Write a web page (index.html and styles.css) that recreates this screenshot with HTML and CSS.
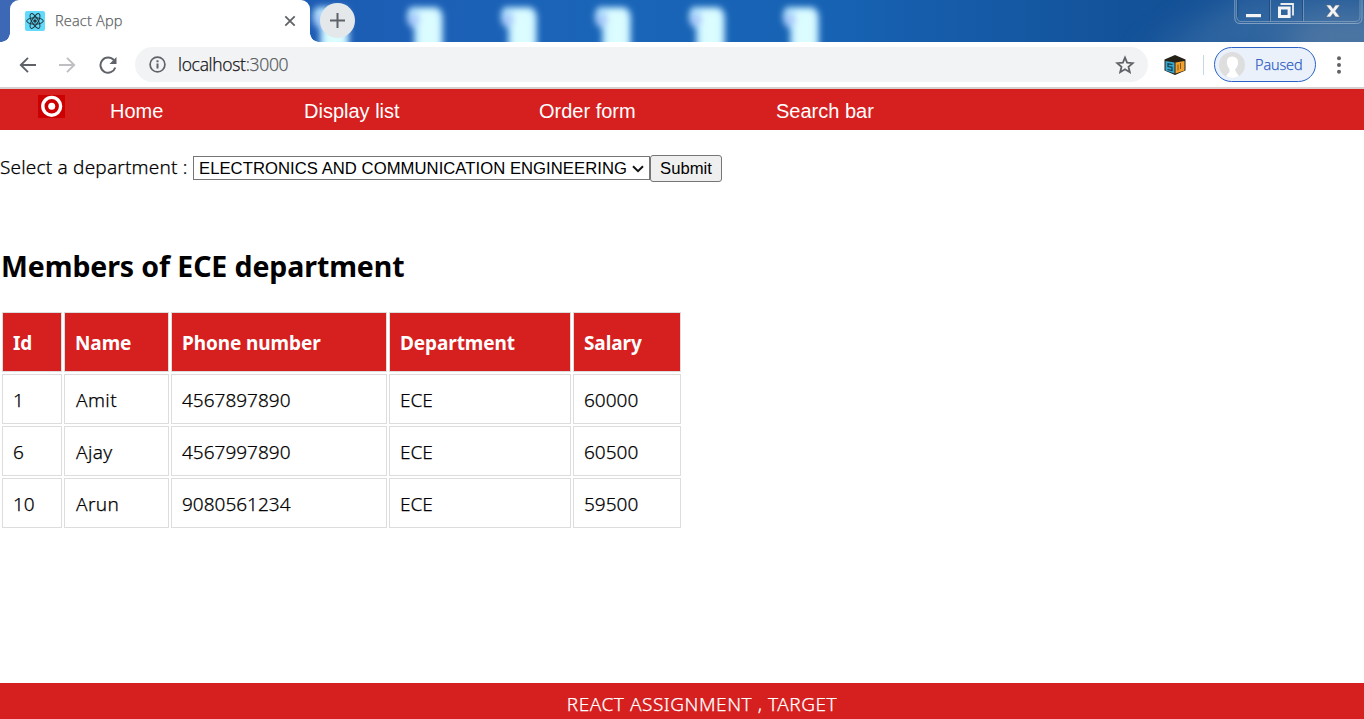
FILE: index.html
```html
<!DOCTYPE html>
<html lang="en">
<head>
<meta charset="utf-8">
<title>React App</title>
<link rel="stylesheet" href="styles.css">
</head>
<body>
<div class="window">
  <div class="titlebar">
    <svg class="wallpaper" width="1364" height="42" viewBox="0 0 1364 42" aria-hidden="true">
      <defs>
        <filter id="soft" x="-30%" y="-30%" width="160%" height="160%"><feGaussianBlur stdDeviation="3"/></filter>
        <filter id="haze" x="-30%" y="-60%" width="160%" height="220%"><feGaussianBlur stdDeviation="16"/></filter>
        <g id="scroll">
          <path d="M6 7 H30 Q38 8 38 18 V60 H9 V28 Q2 26 2 17 Q2 10 6 7Z" fill="#b5e4ff"/>
          <path d="M14 10 H30 Q34 12 34 20 V60 H14Z" fill="#dcfdff"/>
          <circle cx="9" cy="20" r="6" fill="#a9c9fb"/>
        </g>
      </defs>
      <path d="M1140 60 L1250 -10 H1400 V60Z" fill="#4c7cac" opacity=".5" filter="url(#haze)"/>
      <path d="M1270 60 L1310 18 H1400 V60Z" fill="#6685a8" opacity=".6" filter="url(#haze)"/>
      <g filter="url(#soft)">
        <use href="#scroll" x="311"/><use href="#scroll" x="405"/><use href="#scroll" x="499"/>
        <use href="#scroll" x="593"/><use href="#scroll" x="687"/><use href="#scroll" x="781"/>
      </g>
    </svg>
    <div class="tab">
      <svg width="20" height="20" viewBox="0 0 20 20"><rect width="20" height="20" rx="2" fill="#61dafb"/><g fill="none" stroke="#20343c" stroke-width="1"><ellipse cx="10" cy="10" rx="8.3" ry="3.2"/><ellipse cx="10" cy="10" rx="8.3" ry="3.2" transform="rotate(60 10 10)"/><ellipse cx="10" cy="10" rx="8.3" ry="3.2" transform="rotate(120 10 10)"/></g><circle cx="10" cy="10" r="1.8" fill="#20343c"/></svg>
      <span class="tab-title">React App</span>
      <svg width="12" height="12" viewBox="0 0 12 12" stroke="#5f6368" stroke-width="1.8"><path d="M1.3 1.3 10.7 10.7M10.7 1.3 1.3 10.7"/></svg>
    </div>
    <div class="new-tab"><svg width="15" height="15" viewBox="0 0 15 15" stroke="#5f6368" stroke-width="2"><path d="M0 7.500H15M7.500 0V15"/></svg></div>
    <svg class="controls" width="130" height="25" viewBox="0 0 130 25" fill="none">
      <path d="M.8 0V18Q.8 23.500 6 23.500H122.500Q128 23.500 128 18V0" stroke="#9ab3cd" stroke-opacity=".75"/>
      <path d="M2.600 0V17Q3 21.500 7 21.500H121Q126 21.500 126 17V0M36.500 0V21.500M69.500 0V21.500" stroke="#8ca9c8" stroke-opacity=".65"/>
      <path d="M3.700 0V17M35.500 0V21M68.500 0V21" stroke="#173d6c" stroke-opacity=".55"/>
      <rect x="12" y="14" width="15" height="3.200" fill="#f4f4f4"/>
      <path d="M46.500 4H59V15.500" stroke="#eee" stroke-width="1.800"/>
      <rect x="45.500" y="8" width="9.600" height="8.500" stroke="#f4f4f4" stroke-width="3"/>
      <path d="M92 5H96.500L99 8.500 101.500 5H106L101.400 11 106 17H101.500L99 13.500 96.500 17H92L96.600 11Z" fill="#f4f4f4" stroke="#52647a" stroke-width=".6"/>
    </svg>
  </div>
  <div class="toolbar">
    <svg class="back" width="18" height="18" viewBox="0 0 18 18" fill="none" stroke="#5f6368" stroke-width="1.9"><path d="M17 9H2M9 1.800 1.800 9 9 16.200"/></svg>
    <svg class="forward" width="18" height="18" viewBox="0 0 18 18" fill="none" stroke="#bdbfc2" stroke-width="1.900"><path d="M1 9H16M9 1.800 16.200 9 9 16.200"/></svg>
    <svg class="reload" width="18" height="18" viewBox="0 0 18 18"><path d="M14.900 4.200A7.600 7.600 0 1 0 16.300 11.500" fill="none" stroke="#5f6368" stroke-width="2"/><path d="M17.500 1V8H10.500Z" fill="#5f6368"/></svg>
    <div class="address">
      <svg width="17" height="17" viewBox="0 0 17 17"><circle cx="8.500" cy="8.500" r="7.400" fill="none" stroke="#5f6368" stroke-width="1.700"/><path d="M7.500 7.500H9.500V12.500H7.500ZM7.500 4.300H9.500V6.200H7.500Z" fill="#5f6368"/></svg>
      <span class="url">localhost<span class="port">:3000</span></span>
      <svg class="star" width="20" height="20" viewBox="0 0 20 20" fill="none" stroke="#5f6368" stroke-width="1.800"><path d="M10 2.600 12.100 7.700 17.700 8.200 13.500 11.800 14.800 17.200 10 14.300 5.200 17.200 6.500 11.800 2.300 8.200 7.900 7.700Z"/></svg>
    </div>
    <svg class="cube" width="22" height="20" viewBox="0 0 22 20"><path d="M.5 4.500 11 0 21.500 4.500V15.500L11 20 .5 15.500Z" fill="#252117"/><path d="M1.500 6 10.500 7.500V18.500L1.500 15.500Z" fill="#36a8d2"/><path d="M11.500 7.500 20.500 6V15.500L11.500 18.500Z" fill="#f3a32b"/><path d="M8.500 9.500 4 8.800V11.500L8 12.300V15.500L3.500 14.500" fill="none" stroke="#173c49" stroke-width="1.200"/><path d="M14 9.500V15.500M16.500 8V14" fill="none" stroke="#8a5520" stroke-width="1"/></svg>
    <span class="divider"></span>
    <div class="profile">
      <svg width="26" height="26" viewBox="0 0 26 26"><circle cx="13" cy="13" r="13" fill="#dedede"/><path d="M8 12Q7 5 13 4.500 20 5 19 12 18.500 15.500 16 17.500L17 20 20 24Q13 28 7 24L10.500 20V17Q8.500 15 8 12Z" fill="#fff"/></svg>
      <span class="paused">Paused</span>
    </div>
    <svg class="more" width="4" height="18" viewBox="0 0 4 18" fill="#5f6368"><circle cx="2" cy="2.200" r="2"/><circle cx="2" cy="9" r="2"/><circle cx="2" cy="15.800" r="2"/></svg>
  </div>
  <nav class="nav">
    <svg class="logo" width="27" height="23" viewBox="0 0 27 23"><rect width="27" height="23" fill="#c00"/><circle cx="13.700" cy="11.300" r="8.900" fill="none" stroke="#fff" stroke-width="3.400"/><circle cx="13.700" cy="11.300" r="3.500" fill="#fff"/></svg>
    <a class="home">Home</a><a class="list">Display list</a><a class="order">Order form</a><a class="search">Search bar</a>
  </nav>
  <main class="content">
    <form class="filter">
      <label class="label">Select a department :</label>
      <div class="select"><span class="choice">ELECTRONICS AND COMMUNICATION ENGINEERING</span><svg width="12" height="8" viewBox="0 0 12 8" fill="none" stroke="#111" stroke-width="2"><path d="M1 1.300 6 6.200 11 1.300"/></svg></div>
      <button class="submit" type="button">Submit</button>
    </form>
    <h2 class="heading"><span class="heading-text">Members of ECE department</span></h2>
    <table class="members">
      <colgroup><col class="c-id"><col class="c-name"><col class="c-phone"><col class="c-dept"><col class="c-salary"></colgroup>
      <thead><tr><th>Id</th><th>Name</th><th>Phone number</th><th>Department</th><th>Salary</th></tr></thead>
      <tbody>
        <tr><td>1</td><td>Amit</td><td>4567897890</td><td>ECE</td><td>60000</td></tr>
        <tr><td>6</td><td>Ajay</td><td>4567997890</td><td>ECE</td><td>60500</td></tr>
        <tr><td>10</td><td>Arun</td><td>9080561234</td><td>ECE</td><td>59500</td></tr>
      </tbody>
    </table>
  </main>
  <footer class="footer"><span class="footer-text">REACT ASSIGNMENT , TARGET</span></footer>
</div>
</body>
</html>
```
FILE: styles.css
```css
* { box-sizing: border-box; }
body { margin: 0; overflow: hidden; background: #fff; color: #000; font-family: "Noto Sans", "Open Sans", sans-serif; }
svg { display: block; flex: none; }
.window { width: 1364px; height: 719px; display: flex; flex-direction: column; }

.titlebar { position: relative; height: 42px; flex: none; display: flex; background: linear-gradient(90deg, #3d68b5 0, #1d5cb4 310px, #1a65b8 600px, #1762b3 840px, #135299 1130px, #184f90 1364px); }
.wallpaper { position: absolute; inset: 0; }
.tab { position: relative; width: 300px; height: 42px; margin-left: 10px; padding: 0 14px 0 15px; display: flex; align-items: center; background: #fff; border-radius: 9px 9px 0 0; }
.tab::before, .tab::after { content: ""; position: absolute; bottom: 0; width: 9px; height: 9px; }
.tab::before { left: -9px; background: radial-gradient(circle at 0 0, transparent 8.5px, #fff 9px); }
.tab::after { right: -9px; background: radial-gradient(circle at 100% 0, transparent 8.5px, #fff 9px); }
.tab-title { flex: 1; margin-left: 10px; padding-bottom: 2px; font-size: 14.5px; font-weight: 300; color: #5c5f62; font-family: "Open Sans", sans-serif; letter-spacing: 0.2px; -webkit-text-stroke: 0.25px; }
.new-tab { position: relative; width: 35px; height: 35px; margin: 3px 0 0 10px; border-radius: 50%; background: #e4e8eb; display: flex; align-items: center; justify-content: center; }
.controls { position: relative; margin-left: auto; }

.toolbar { height: 47px; flex: none; display: flex; align-items: center; padding-left: 19px; border-bottom: 2px solid #d6d0d0; background: #fff; }
.forward { margin-left: 21px; }
.reload { margin-left: 23px; }
.address { width: 1013px; height: 35px; margin-left: 18px; padding: 0 13px 0 14px; display: flex; align-items: center; border-radius: 18px; background: #f1f3f4; }
.url { margin-left: 12px; padding-bottom: 2px; font-family: "Open Sans", sans-serif; font-size: 17.5px; font-weight: 300; color: #111; letter-spacing: -0.3px; -webkit-text-stroke: 0.25px; }
.port { color: #55585b; }
.star { margin-left: auto; }
.cube { margin-left: 16px; }
.divider { width: 1px; height: 20px; margin-left: 17px; background: #c5d7e8; }
.profile { width: 102px; height: 35px; margin-left: 10px; padding-left: 4px; display: flex; align-items: center; border: 1px solid #2b62c4; border-radius: 18px; background: #eaf1fb; }
.paused { margin-left: 10px; font-family: "Open Sans", sans-serif; font-size: 14.5px; font-weight: 300; color: #2a58c4; letter-spacing: -0.1px; -webkit-text-stroke: 0.25px; }
.more { margin-left: 21px; }

.nav { height: 41px; flex: none; display: flex; align-items: center; padding: 3px 0 0 38px; background: #d6201f; color: #fff; font: 20px "Liberation Sans", Arial, sans-serif; }
.logo { align-self: flex-start; margin-top: 3px; }
.home { margin-left: 45px; width: 194px; }
.list { width: 235px; }
.order { width: 237px; }

.content { flex: 1; }
.filter { height: 76px; display: flex; align-items: center; }
.label { width: 193px; font-size: 19px; font-weight: 300; white-space: nowrap; letter-spacing: 0.19px; padding-bottom: 2px; -webkit-text-stroke: 0.25px; }
.select { width: 457px; height: 24px; padding: 1px 5px 0; display: flex; align-items: center; justify-content: space-between; border: 1px solid #767676; background: #fff; font: 16.67px "Liberation Sans", Arial, sans-serif; letter-spacing: 0.04px; white-space: nowrap; }
.submit { width: 72px; height: 27px; padding: 1px 0 0; border: 1px solid #767676; border-radius: 3px; background: #efefef; color: #000; font: 16.67px "Liberation Sans", Arial, sans-serif; }
.heading { margin: 40px 0 0; padding-left: 1px; height: 41px; font-size: 28.5px; line-height: 41px; color: #000; white-space: nowrap; letter-spacing: -0.1px; }
.members { margin-top: 23px; table-layout: fixed; width: 683px; border-spacing: 2px; font-size: 19px; }
.c-id { width: 60px; }
.c-name { width: 105px; }
.c-phone { width: 216px; }
.c-dept { width: 182px; }
.c-salary { width: 108px; }
.members th, .members td { height: 50px; padding: 2px 10px 0; border: 1px solid #ddd; text-align: left; white-space: nowrap; line-height: 28px; letter-spacing: 0; }
.members td { font-weight: 300; -webkit-text-stroke: 0.25px; }
.members td:nth-child(2) { padding-left: 11px; letter-spacing: 0.4px; }
.members th { height: 60px; background: #d6201f; color: #fff; letter-spacing: -0.1px; }
.footer { height: 36px; flex: none; padding: 1px 0 0 40px; background: #d6201f; color: #fff; font-size: 19px; font-weight: 300; line-height: 41px; text-align: center; }
.footer-text { letter-spacing: 0.54px; -webkit-text-stroke: 0.25px; }
```
